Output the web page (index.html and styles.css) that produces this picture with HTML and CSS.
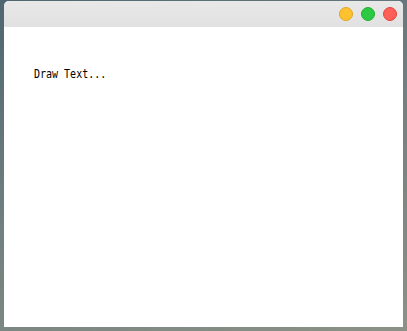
FILE: index.html
```html
<!DOCTYPE html>
<html lang="en">
<head>
    <meta charset="UTF-8">
    <meta name="viewport" content="width=device-width, initial-scale=1.0">
    <title>Draw Text</title>
    <link rel="stylesheet" href="styles.css">
</head>

<body>
    <div class="window">
        <div class="titlebar">
            <span class="btn btn_min"></span>
            <span class="btn btn_max"></span>
            <span class="btn btn_close"></span>
        </div>
        <div class="content">
            <span class="draw_text">Draw Text...</span>
        </div>
    </div>
</body>
</html>
```

FILE: styles.css
```css
/* 桌面背景 */
body{
    margin: 0;
    height: 331px;
    box-sizing: border-box;
    padding: 1px 4px 4px 4px;
    background: linear-gradient(160deg, #4f6670 0%, #6f7f80 45%, #8b9185 100%);
    font-family: "DejaVu Sans Mono", monospace;
}

.window{
    display: flex;
    flex-direction: column;
    height: 100%;
    background-color: #fff;
    border-radius: 5px 5px 0 0;
    overflow: hidden;
}

/* 标题栏 */
.titlebar{
    height: 26px;
    display: flex;
    align-items: center;
    justify-content: flex-end;
    gap: 8px;
    padding-right: 6px;
    background: linear-gradient(#e8e8e8, #e1e1e1);
}
.btn{
    width: 14px;
    height: 14px;
    border-radius: 50%;
    box-sizing: border-box;
}
.btn_min{
    background-color: #fec22f;
    border: 1px solid #e0a523;
}
.btn_max{
    background-color: #2bca42;
    border: 1px solid #22ad33;
}
.btn_close{
    background-color: #fe5f57;
    border: 1px solid #e0443e;
}

.content{
    flex: 1;
    padding: 34px 0 0 30px;
}
.draw_text{
    display: inline-block;
    font-size: 10px;
    line-height: 12px;
    color: #000;
    transform: scaleY(1.22);
    transform-origin: left top;
}
```
